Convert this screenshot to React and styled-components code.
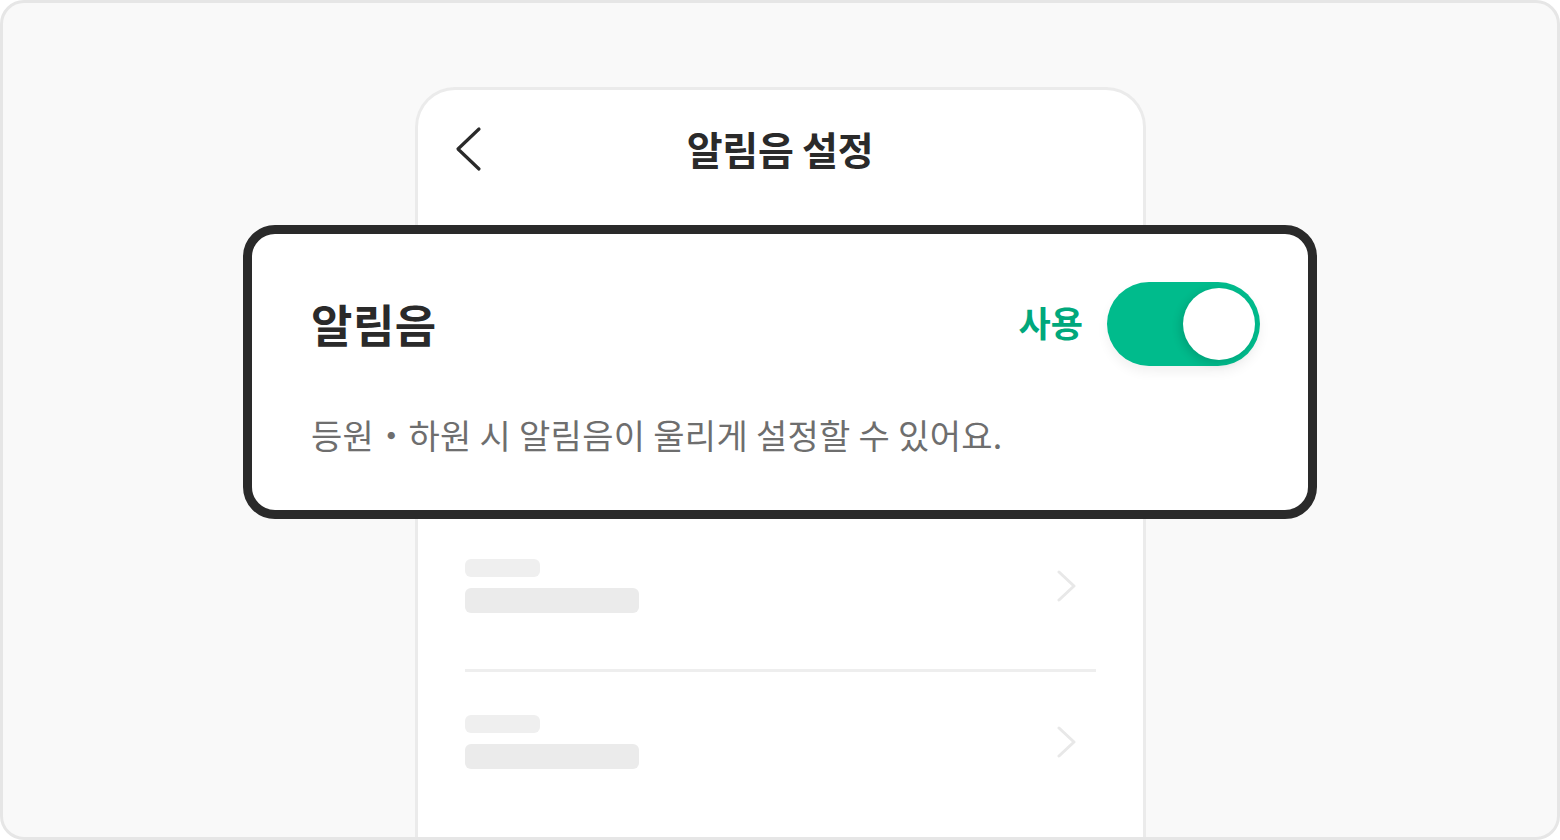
import React from 'react';
import styled, { createGlobalStyle } from 'styled-components';

const Global = createGlobalStyle`
  html, body {
    margin: 0;
    padding: 0;
    background: #ffffff;
  }
  body {
    font-family: "Noto Sans CJK KR", "Noto Sans", sans-serif;
  }
  * {
    box-sizing: border-box;
  }
`;

const Frame = styled.div`
  position: relative;
  width: 1560px;
  height: 840px;
  border: 3px solid #e6e6e6;
  border-radius: 24px;
  background: #f9f9f9;
  overflow: hidden;
  display: flex;
  justify-content: center;
  padding-top: 84px;
`;

const Phone = styled.div`
  width: 731px;
  height: 820px;
  flex-shrink: 0;
  background: #ffffff;
  border: 3px solid #ebebeb;
  border-bottom: none;
  border-radius: 40px 40px 0 0;
  display: flex;
  flex-direction: column;
`;

const Header = styled.header`
  position: relative;
  height: 120px;
  display: flex;
  align-items: center;
  justify-content: center;
`;

const BackButton = styled.button`
  position: absolute;
  left: 36px;
  top: 36px;
  width: 28px;
  height: 46px;
  padding: 0;
  border: none;
  background: none;
  display: flex;
  align-items: center;
  justify-content: center;
`;

const HeaderTitle = styled.h1`
  margin: 0 0 4px;
  font-size: 39px;
  font-weight: 700;
  color: #2a2a2a;
  letter-spacing: -0.3px;
`;

const HiddenSection = styled.div`
  height: 306px;
`;

const List = styled.ul`
  margin: 0;
  padding: 0 47px;
  list-style: none;
`;

const Row = styled.li`
  display: flex;
  align-items: center;
  justify-content: space-between;
  padding: 43px 18px 56px 0;
  border-bottom: ${(p) => (p.$divider ? '3px solid #eeeeee' : 'none')};
`;

const Lines = styled.div`
  display: flex;
  flex-direction: column;
  gap: 11px;
`;

const Skeleton = styled.span`
  display: block;
  width: ${(p) => p.$w}px;
  height: ${(p) => p.$h}px;
  border-radius: 6px;
  background: ${(p) => p.$color};
`;

const Card = styled.section`
  position: absolute;
  left: 240px;
  top: 222px;
  width: 1074px;
  height: 294px;
  background: #ffffff;
  border: 9px solid #2a2a2a;
  border-radius: 32px;
  padding: 48px 48px 0 59px;
  display: flex;
  flex-direction: column;
`;

const CardTop = styled.div`
  display: flex;
  align-items: center;
  justify-content: space-between;
  height: 84px;
`;

const CardTitle = styled.h2`
  margin: 0;
  font-size: 45px;
  line-height: 60px;
  font-weight: 700;
  color: #2a2a2a;
  letter-spacing: 0.5px;
`;

const SwitchWrap = styled.div`
  display: flex;
  align-items: center;
  gap: 24px;
`;

const SwitchLabel = styled.span`
  font-size: 35px;
  line-height: 48px;
  font-weight: 700;
  color: #00a87c;
  padding-bottom: 4px;
`;

const Track = styled.div`
  position: relative;
  width: 153px;
  height: 84px;
  border-radius: 42px;
  background: #00bb8c;
  box-shadow: 0 6px 12px rgba(0, 0, 0, 0.06);
`;

const Knob = styled.span`
  position: absolute;
  top: 6px;
  right: 5px;
  width: 72px;
  height: 72px;
  border-radius: 50%;
  background: #ffffff;
  box-shadow: -3px 3px 10px rgba(0, 0, 0, 0.14);
`;

const Description = styled.p`
  margin: 47px 0 0;
  font-size: 34px;
  line-height: 44px;
  font-weight: 400;
  color: #6e6e6e;
  letter-spacing: 0.3px;
`;

function ChevronLeft() {
  return (
    <svg width="28" height="46" viewBox="0 0 28 46">
      <polyline
        points="25,3 4,23 25,43"
        fill="none"
        stroke="#2a2a2a"
        strokeWidth="3.2"
        strokeLinecap="round"
        strokeLinejoin="round"
      />
    </svg>
  );
}

function ChevronRight() {
  return (
    <svg width="22" height="32" viewBox="0 0 22 32">
      <polyline
        points="3,2 18,16 3,30"
        fill="none"
        stroke="#e8e8e8"
        strokeWidth="3"
        strokeLinecap="round"
        strokeLinejoin="round"
      />
    </svg>
  );
}

function PlaceholderRow({ divider }) {
  return (
    <Row $divider={divider}>
      <Lines>
        <Skeleton $w={75} $h={18} $color="#efefef" />
        <Skeleton $w={174} $h={25} $color="#ebebeb" />
      </Lines>
      <ChevronRight />
    </Row>
  );
}

export default function App() {
  return (
    <>
      <Global />
      <Frame>
        <Phone>
          <Header>
            <BackButton aria-label="뒤로">
              <ChevronLeft />
            </BackButton>
            <HeaderTitle>알림음 설정</HeaderTitle>
          </Header>
          <HiddenSection />
          <List>
            <PlaceholderRow divider />
            <PlaceholderRow />
          </List>
        </Phone>
        <Card>
          <CardTop>
            <CardTitle>알림음</CardTitle>
            <SwitchWrap>
              <SwitchLabel>사용</SwitchLabel>
              <Track>
                <Knob />
              </Track>
            </SwitchWrap>
          </CardTop>
          <Description>등원・하원 시 알림음이 울리게 설정할 수 있어요.</Description>
        </Card>
      </Frame>
    </>
  );
}
